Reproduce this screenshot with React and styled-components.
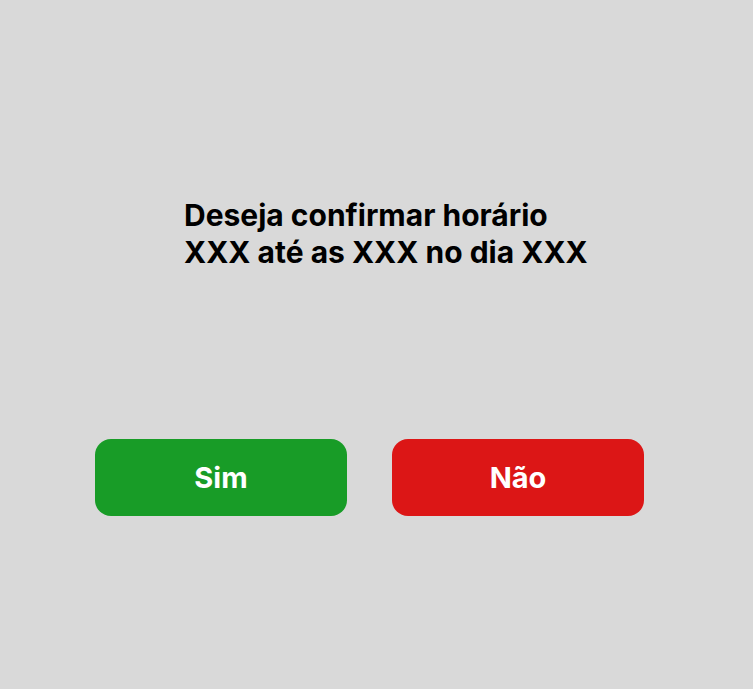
import React from "react";
import styled, { createGlobalStyle } from "styled-components";

const GlobalStyle = createGlobalStyle`
	html, body {
		margin: 0;
		padding: 0;
		background: #d9d9d9;
	}
	body {
		font-family: Inter, "Noto Sans", sans-serif;
	}
`;

const Screen = styled.div`
	width: 753px;
	height: 689px;
	background: #d9d9d9;
	display: flex;
	flex-direction: column;
	box-sizing: border-box;
	padding-top: 197px;
`;

const Question = styled.h1`
	margin: 0 0 0 184px;
	font-size: 30px;
	line-height: 37px;
	font-weight: 700;
	color: #000;
`;

const Actions = styled.div`
	display: flex;
	gap: 45px;
	margin: 168px 0 0 95px;
`;

const Button = styled.button`
	width: 252px;
	height: 77px;
	border: none;
	border-radius: 16px;
	background: ${(p) => (p.$variant === "no" ? "#dc1616" : "#189c27")};
	color: #fff;
	font-family: Inter, "Noto Sans", sans-serif;
	font-size: 29px;
	font-weight: 700;
	cursor: pointer;
	display: flex;
	align-items: center;
	justify-content: center;
	padding: 0;
`;

const App = () => {
	return (
		<>
			<GlobalStyle />
			<Screen>
				<Question>
					Deseja confirmar horário
					<br />
					XXX até as XXX no dia XXX
				</Question>
				<Actions>
					<Button $variant="yes">Sim</Button>
					<Button $variant="no">Não</Button>
				</Actions>
			</Screen>
		</>
	);
};

export default App;
